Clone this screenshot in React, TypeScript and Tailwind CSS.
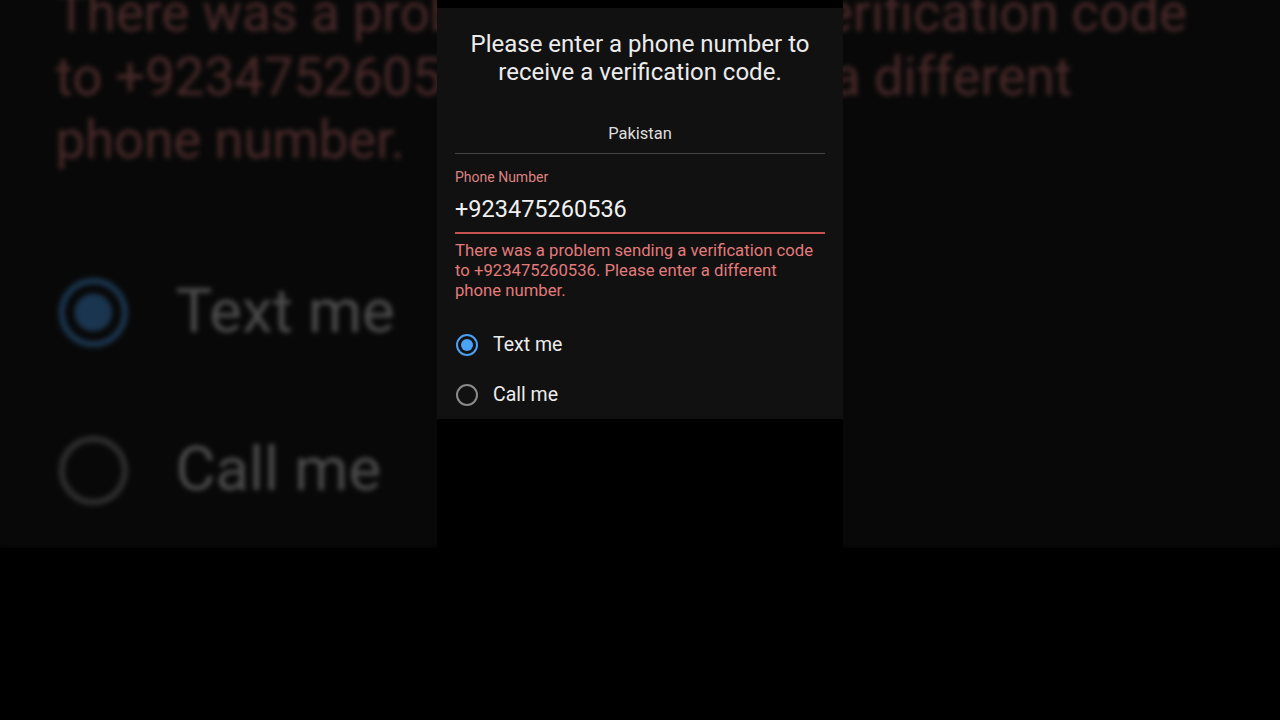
import React from "react";

const font = { fontFamily: "Roboto, 'Noto Sans', sans-serif" };

function Radio({ checked }: { checked: boolean }) {
  return (
    <span
      className={
        checked
          ? "w-[22px] h-[22px] rounded-full border-2 border-[#4a9ff0] flex items-center justify-center"
          : "w-[22px] h-[22px] rounded-full border-2 border-[#8a8a8a]"
      }
    >
      {checked && <span className="w-[12px] h-[12px] rounded-full bg-[#4aa3f8]" />}
    </span>
  );
}

function PhoneScreen() {
  return (
    <div className="w-[406px] h-[548px] bg-black flex flex-col">
      <div className="h-[8px]" />
      <div className="bg-[#111111] px-[18px] pt-[22px] h-[411px] flex flex-col">
        <h1 className="text-[24px] leading-[28px] text-[#ececec] text-center">
          Please enter a phone number to
          <br />
          receive a verification code.
        </h1>
        <div className="mt-[38px] pb-[9px] border-b border-[#454545] text-center text-[16.5px] leading-[20px] text-[#dedede]">
          Pakistan
        </div>
        <div className="mt-[14px] text-[14px] leading-[18px] text-[#dd8282]">
          Phone Number
        </div>
        <div className="mt-[9px] pb-[9px] border-b-2 border-[#c65252] text-[23.5px] leading-[28px] text-[#f0f0f0]">
          +923475260536
        </div>
        <p className="mt-[7px] text-[16.7px] leading-[20px] text-[#e37b7b] whitespace-nowrap">
          There was a problem sending a verification code
          <br />
          to +923475260536. Please enter a different
          <br />
          phone number.
        </p>
        <div className="mt-[19px] flex flex-col">
          <label className="h-[50px] flex items-center gap-[15px] pl-[1px]">
            <Radio checked />
            <span className="text-[19.5px] text-[#ececec]">Text me</span>
          </label>
          <label className="h-[50px] flex items-center gap-[15px] pl-[1px]">
            <Radio checked={false} />
            <span className="text-[19.5px] text-[#ececec]">Call me</span>
          </label>
        </div>
      </div>
    </div>
  );
}

export default function App() {
  return (
    <div className="relative w-[1280px] h-[720px] bg-black overflow-hidden" style={font}>
      {/* blurred zoomed backdrop, like a shorts video frame */}
      <div aria-hidden className="absolute left-0 top-0 w-[1280px] h-[548px] overflow-hidden bg-[#050505]">
        <div className="w-[1280px] h-[720px] flex justify-center scale-[3.16] origin-[640px_360px] opacity-30 blur-[0.8px]">
          <PhoneScreen />
        </div>
      </div>
      <div className="relative w-[1280px] h-[720px] flex justify-center">
        <PhoneScreen />
      </div>
    </div>
  );
}
